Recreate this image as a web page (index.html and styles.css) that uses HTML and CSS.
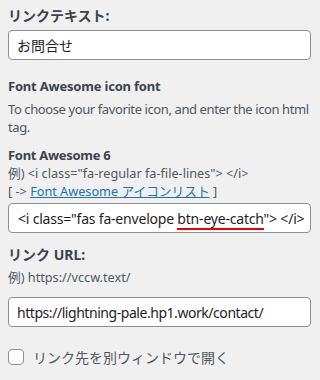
FILE: index.html
```html
<!DOCTYPE html>
<html lang="ja">
<head>
<meta charset="utf-8">
<link rel="stylesheet" href="styles.css">
</head>
<body>
<div class="panel">
  <div class="label">リンクテキスト:</div>
  <div class="field"><span>お問合せ</span></div>

  <div class="heading">Font Awesome icon font</div>
  <p class="desc">To choose your favorite icon, and enter the icon html tag.</p>
  <div class="subhead">Font Awesome 6</div>
  <div class="note">例) &lt;i class="fa-regular fa-file-lines"&gt; &lt;/i&gt;</div>
  <div class="note">[ -&gt; <a class="link" href="#">Font Awesome アイコンリスト</a> ]</div>
  <div class="field code"><span>&lt;i class="fas fa-envelope <span class="spell">btn-eye-catch</span>"&gt; &lt;/i&gt;</span></div>

  <div class="label url">リンク URL:</div>
  <div class="note ex">例) https://vccw.text/</div>
  <div class="field urlfield"><span>https://lightning-pale.hp1.work/contact/</span></div>

  <label class="check"><span class="box"></span><span>リンク先を別ウィンドウで開く</span></label>
</div>
</body>
</html>
```
FILE: styles.css
```css
html, body {
  margin: 0;
  padding: 0;
  background: #f0f0f0;
}
body {
  font-family: "Noto Sans", "Noto Sans CJK JP", sans-serif;
  color: #3c434a;
}
.panel {
  padding: 6px 9px 0 8px;
  display: flex;
  flex-direction: column;
}
.label {
  font-size: 14px;
  font-weight: 700;
  color: #3c434a;
  line-height: 20px;
  margin-bottom: 4px;
}
.field {
  background: #fff;
  border: 1px solid #8c8f94;
  border-radius: 4px;
  height: 30px;
  box-sizing: border-box;
  display: flex;
  align-items: center;
  padding: 0 8px;
  font-size: 14px;
  color: #1e1e1e;
  white-space: nowrap;
  overflow: hidden;
}
.heading {
  margin-top: 17px;
  font-size: 13px;
  font-weight: 700;
  line-height: 18px;
  letter-spacing: -0.2px;
}
.desc {
  margin: 5px 0 0;
  font-size: 13px;
  line-height: 18px;
  letter-spacing: -0.4px;
  color: #50575e;
}
.subhead {
  margin-top: 10px;
  font-size: 13px;
  font-weight: 700;
  line-height: 18px;
  letter-spacing: -0.3px;
}
.note {
  font-size: 12.7px;
  line-height: 18px;
  color: #50575e;
}
.link {
  color: #2271b1;
  text-decoration: underline;
}
.code {
  margin-top: 3px;
  font-size: 14px;
  padding: 0 7px 0 9px;
  letter-spacing: -0.2px;
}
.urlfield {
  letter-spacing: -0.45px;
}
.spell {
  border-bottom: 2px solid #e00;
}
.url {
  margin-top: 12px;
  margin-bottom: 3px;
}
.ex {
  margin-bottom: 11px;
}
.check {
  margin-top: 20px;
  display: flex;
  align-items: center;
  gap: 9px;
  font-size: 14px;
  color: #50575e;
}
.box {
  width: 16px;
  height: 16px;
  box-sizing: border-box;
  border: 1px solid #8c8f94;
  border-radius: 4px;
  background: #fff;
}
```
